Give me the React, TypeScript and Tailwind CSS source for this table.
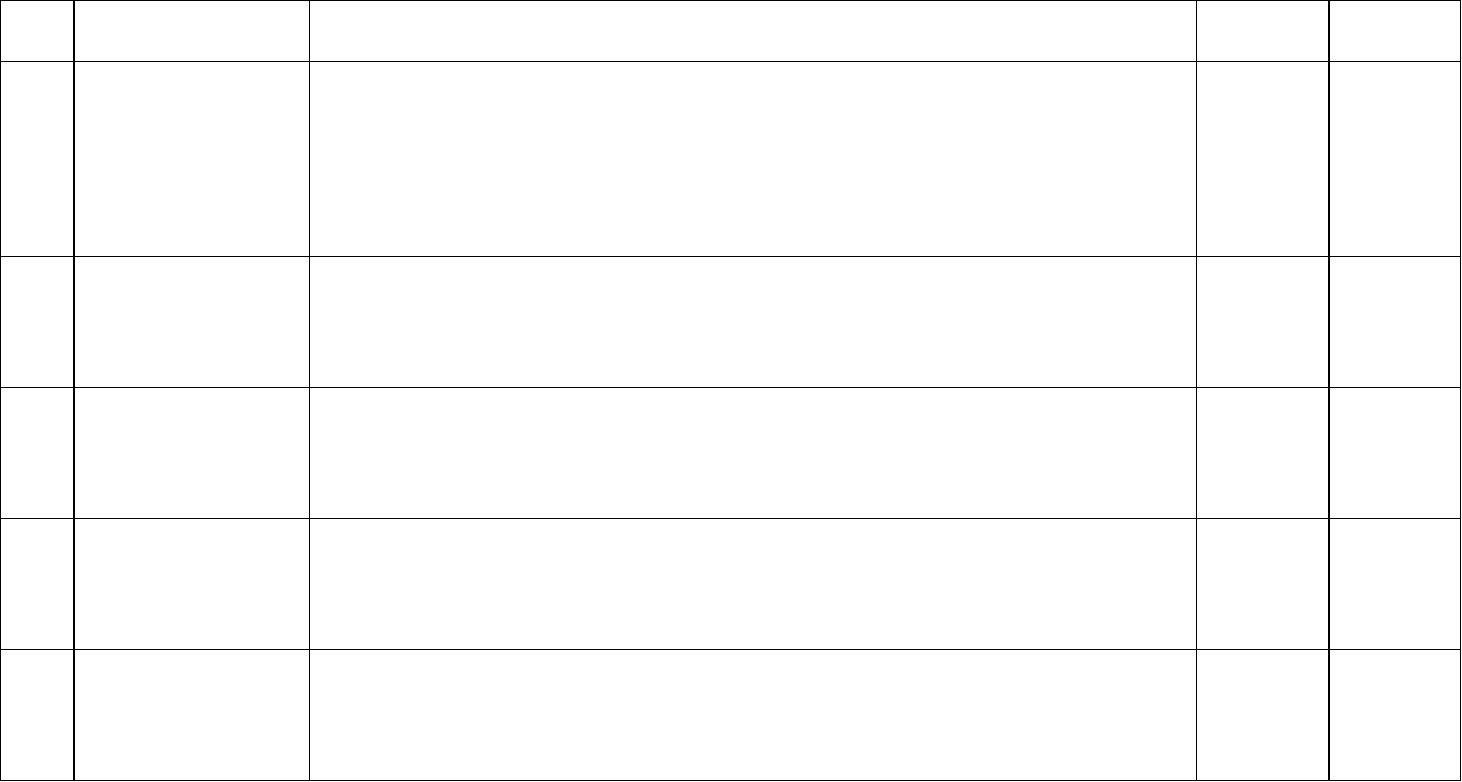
const columns = [
  "w-[74px] border-r-2",
  "w-[235px] border-r",
  "w-[887px] border-r",
  "w-[133px] border-r-2",
  "w-[131px] border-r",
];

const rows = ["h-[61px]", "h-[195px]", "h-[131px]", "h-[131px]", "h-[131px]", "h-[131px]"];

const App = () => {
  return (
    <div className="bg-white w-[1462px] h-[782px]">
      <div className="flex flex-col w-[1461px] border-l border-t border-black">
        {rows.map((row, rowIndex: number) => (
          <div key={rowIndex} className={`flex shrink-0 border-b border-black ${row}`}>
            {columns.map((col, colIndex: number) => (
              <div key={colIndex} className={`shrink-0 border-black ${col}`} />
            ))}
          </div>
        ))}
      </div>
    </div>
  );
};

export default App;
